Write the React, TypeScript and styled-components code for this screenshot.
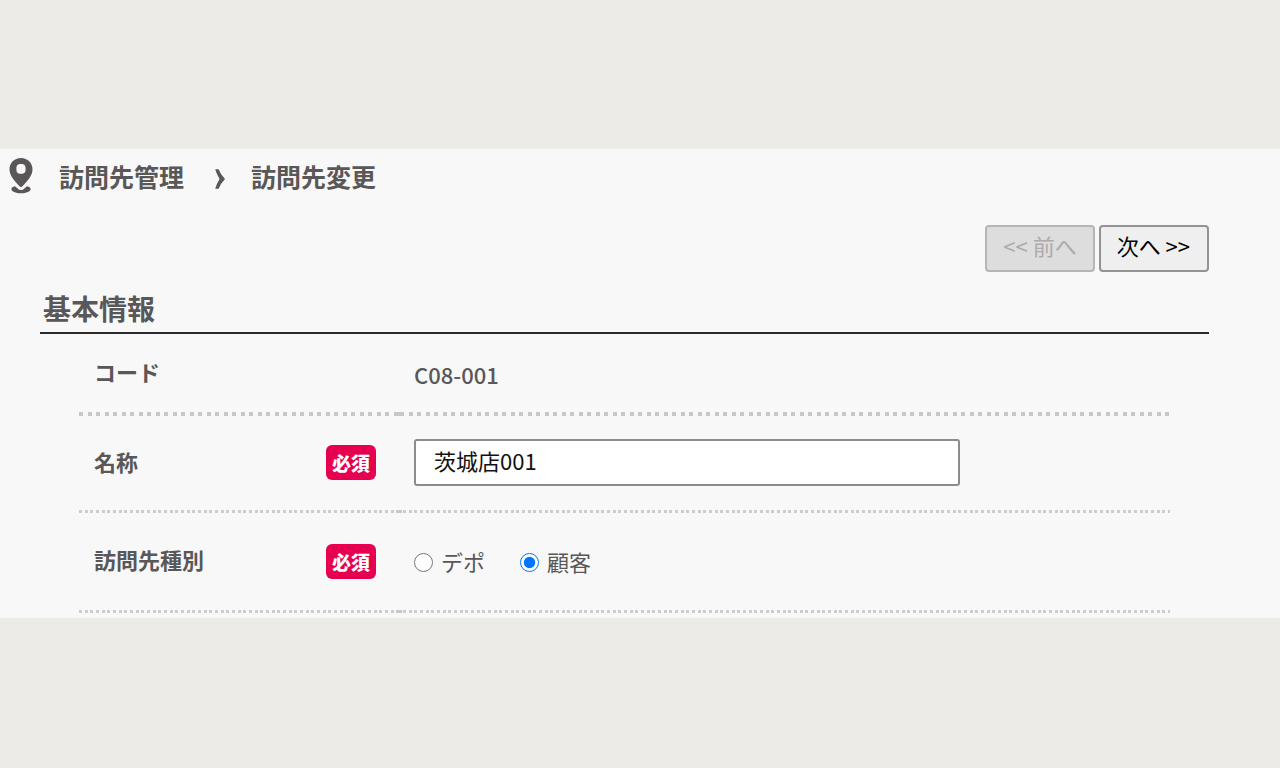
import { useState } from "react";
import styled, { createGlobalStyle } from "styled-components";

const ink = "#595757";

const GlobalStyle = createGlobalStyle`
  *, *::before, *::after { box-sizing: border-box; }
  body {
    margin: 0;
    background: #ecebe7;
    color: ${ink};
    font-family: "Noto Sans CJK JP", "Noto Sans", sans-serif;
    font-size: 22px;
    line-height: 32px;
  }
`;

const Page = styled.div`
  min-height: 100vh;
  padding: 149px 0;
`;

const Panel = styled.main`
  background: #f8f8f8;
  padding-bottom: 5px;
`;

const Breadcrumb = styled.nav`
  display: flex;
  align-items: center;
  height: 54px;
  padding-left: 8px;
  font-size: 25px;
  font-weight: 700;
`;

const PinIcon = styled.svg`
  width: 26px;
  height: 38px;
  margin-right: 25px;
`;

const ChevronIcon = styled.svg`
  width: 12px;
  height: 22px;
  margin: 6px 25px 0 30px;
`;

const Crumb = styled.a`
  color: inherit;
  text-decoration: none;
`;

const Content = styled.div`
  padding: 22px 71px 0 40px;
`;

const Pager = styled.div`
  display: flex;
  justify-content: flex-end;
  gap: 4px;
`;

const PagerButton = styled.button`
  height: 47px;
  padding: 0 17px 8px 16px;
  border: 2px solid #939393;
  border-radius: 4px;
  background: #efefef;
  color: #000;
  font: inherit;

  &:disabled {
    padding-right: 16px;
    border-color: #b5b5b5;
    background: #dddddd;
    color: #acaaaa;
  }
`;

const SectionTitle = styled.h1`
  margin: 15px 0 0;
  padding: 2px 3px 5px;
  border-bottom: 2px solid #2b2b2b;
  font-size: 28px;
  font-weight: 700;
  line-height: 38px;
`;

const Fields = styled.form`
  padding: 0 39px 0 38px;
`;

const Row = styled.div<{ $height: number }>`
  display: flex;
  height: ${(p) => p.$height}px;
`;

type LineProps = { $thick?: boolean };

const lineHeight = (p: LineProps) => (p.$thick ? 4 : 3);

const dots = (p: LineProps) =>
  p.$thick
    ? "repeating-linear-gradient(90deg, #c8c8c8 0 4px, transparent 4px 8px, #c8c8c8 8px 12px, transparent 12px 17px)"
    : "repeating-linear-gradient(90deg, #cccccc 0 3px, transparent 3px 6px, #cccccc 6px 9px, transparent 9px 11px, #cccccc 11px 14px, transparent 14px 17px)";

/* A cell's dotted bottom line; the solid layer joins the dots where two cells meet. */
const Cell = styled.div<LineProps>`
  display: flex;
  align-items: center;
  padding-bottom: 4px;
  background-image: linear-gradient(#c8c8c8, #c8c8c8), ${dots};
  background-repeat: no-repeat, repeat-x;
`;

const LabelCell = styled(Cell)`
  justify-content: space-between;
  width: 322px;
  padding-left: 16px;
  padding-right: 24px;
  font-weight: 700;
  background-size: 4px ${lineHeight}px, 17px ${lineHeight}px;
  background-position: right bottom, ${(p) => (p.$thick ? 10 : 1)}px bottom;
`;

const ValueCell = styled(Cell)`
  flex: 1;
  padding-left: 14px;
  background-size: 2px ${lineHeight}px, 17px ${lineHeight}px;
  background-position: left bottom, ${(p) => (p.$thick ? 9 : 3)}px bottom;
`;

const FieldLabel = styled.label`
  padding-bottom: 4px;
`;

const Required = styled.span`
  height: 35px;
  padding: 0 6px;
  border-radius: 6px;
  background: #e6004f;
  color: #fff;
  font-size: 19px;
  font-weight: 900;
  line-height: 35px;
`;

const Code = styled.output`
  padding-top: 2px;
  font-weight: 500;
`;

const NameInput = styled.input`
  width: 546px;
  height: 47px;
  padding: 0 18px 6px;
  border: 2px solid #8c8c8c;
  border-radius: 3px;
  background: #fff;
  color: #111;
  font: inherit;
`;

const Choices = styled.div`
  display: flex;
  gap: 35px;
`;

const Choice = styled.label`
  display: flex;
  align-items: center;
  gap: 8px;
`;

const Radio = styled.input`
  width: 19px;
  height: 19px;
  margin: 2px 0 0;
`;

export default function App() {
  const [name, setName] = useState("茨城店001");
  const [kind, setKind] = useState("customer");

  return (
    <Page lang="ja">
      <GlobalStyle />
      <Panel>
        <Breadcrumb>
          <PinIcon viewBox="0 0 26 38" aria-hidden="true">
            <path
              fill={ink}
              fillRule="evenodd"
              d="M13 1C6.2 1 1.5 6 1.5 12.3C1.5 18.8 6.6 24 11.5 29.2Q13 30.8 14.5 29.2C19.4 24 24.5 18.8 24.5 12.3C24.5 6 19.8 1 13 1ZM13 7C16.8 7 17.6 8.5 17.6 12C17.6 15.3 16.8 16.7 13 16.7C9.2 16.7 8.4 15.3 8.4 12C8.4 8.5 9.2 7 13 7Z"
            />
            <path
              fill={ink}
              d="M7 29.2C4.7 29.6 3.4 30.5 3.4 32C3.4 34.7 7.6 36.2 13 36.2S22.6 34.7 22.6 32C22.6 30.5 21.3 29.6 19 29.2L15.2 32.4Q13 33.8 10.8 32.4Z"
            />
          </PinIcon>
          <Crumb href="#visits">訪問先管理</Crumb>
          <ChevronIcon viewBox="0 0 12 22" aria-hidden="true">
            <path fill={ink} d="M1.2 1.2H4.6Q6.6 6.4 11 11Q6.6 15.6 4.6 20.8H1.2Q2.8 15.4 5.6 11Q2.8 6.6 1.2 1.2Z" />
          </ChevronIcon>
          <span aria-current="page">訪問先変更</span>
        </Breadcrumb>
        <Content>
          <Pager>
            <PagerButton type="button" disabled>&lt;&lt; 前へ</PagerButton>
            <PagerButton type="button">次へ &gt;&gt;</PagerButton>
          </Pager>
          <SectionTitle>基本情報</SectionTitle>
          <Fields>
            <Row $height={82}>
              <LabelCell $thick>
                <FieldLabel htmlFor="code">コード</FieldLabel>
              </LabelCell>
              <ValueCell $thick>
                <Code id="code">C08-001</Code>
              </ValueCell>
            </Row>
            <Row $height={97}>
              <LabelCell>
                <FieldLabel htmlFor="name">名称</FieldLabel>
                <Required>必須</Required>
              </LabelCell>
              <ValueCell>
                <NameInput id="name" value={name} onChange={(e) => setName(e.target.value)} />
              </ValueCell>
            </Row>
            <Row $height={100} role="radiogroup" aria-labelledby="kind">
              <LabelCell>
                <FieldLabel as="span" id="kind">訪問先種別</FieldLabel>
                <Required>必須</Required>
              </LabelCell>
              <ValueCell>
                <Choices>
                  <Choice>
                    <Radio type="radio" name="kind" checked={kind === "depot"} onChange={() => setKind("depot")} />
                    デポ
                  </Choice>
                  <Choice>
                    <Radio type="radio" name="kind" checked={kind === "customer"} onChange={() => setKind("customer")} />
                    顧客
                  </Choice>
                </Choices>
              </ValueCell>
            </Row>
          </Fields>
        </Content>
      </Panel>
    </Page>
  );
}
